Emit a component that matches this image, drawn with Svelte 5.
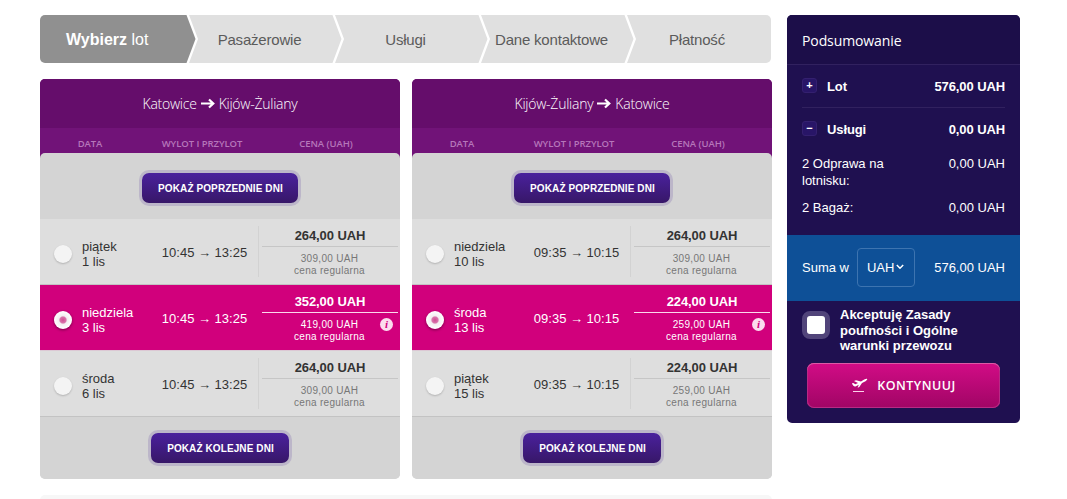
<script>
	let steps = ["Pasażerowie", "Usługi", "Dane kontaktowe", "Płatność"];

	let flights = [
		{
			from: "Katowice",
			to: "Kijów-Żuliany",
			selected: 1,
			days: [
				{ day: "piątek", date: "1 lis", out: "10:45", back: "13:25", price: "264,00", regular: "309,00" },
				{ day: "niedziela", date: "3 lis", out: "10:45", back: "13:25", price: "352,00", regular: "419,00" },
				{ day: "środa", date: "6 lis", out: "10:45", back: "13:25", price: "264,00", regular: "309,00" }
			]
		},
		{
			from: "Kijów-Żuliany",
			to: "Katowice",
			selected: 1,
			days: [
				{ day: "niedziela", date: "10 lis", out: "09:35", back: "10:15", price: "264,00", regular: "309,00" },
				{ day: "środa", date: "13 lis", out: "09:35", back: "10:15", price: "224,00", regular: "259,00" },
				{ day: "piątek", date: "15 lis", out: "09:35", back: "10:15", price: "224,00", regular: "259,00" }
			]
		}
	];

	function select(f, d) {
		flights[f].selected = d;
	}
</script>

<main>
	<div class="content">
		<nav class="steps">
			<div class="step active"><b>Wybierz</b>&nbsp;lot</div>
			{#each steps as step}
				<div class="step">{step}</div>
			{/each}
		</nav>

		<div class="flights">
			{#each flights as flight, f}
				<section class="panel">
					<h2>
						{flight.from}
						<svg width="14" height="12" viewBox="0 0 14 12">
							<path d="M0 5.5H12M8 1.5L12.3 5.5L8 9.5" fill="none" stroke="#fff" stroke-width="2.2" />
						</svg>
						{flight.to}
					</h2>
					<div class="columns">
						<span>DATA</span>
						<span>WYLOT I PRZYLOT</span>
						<span>CENA (UAH)</span>
					</div>
					<div class="body">
						<div class="more top"><button class="prev">POKAŻ POPRZEDNIE DNI</button></div>
						{#each flight.days as d, i}
							<!-- svelte-ignore a11y_click_events_have_key_events, a11y_no_static_element_interactions -->
							<div class="row" class:selected={flight.selected === i} on:click={() => select(f, i)}>
								<span class="radio"></span>
								<div class="day">{d.day}<br />{d.date}</div>
								<div class="time">{d.out} → {d.back}</div>
								<div class="fare">
									<div class="price">{d.price} UAH</div>
									<div class="regular">{d.regular} UAH<br />cena regularna</div>
									{#if flight.selected === i}
										<span class="info">i</span>
									{/if}
								</div>
							</div>
						{/each}
						<div class="more"><button class="next">POKAŻ KOLEJNE DNI</button></div>
					</div>
				</section>
			{/each}
		</div>
		<div class="next-box"></div>
	</div>

	<aside>
		<h3>Podsumowanie</h3>
		<div class="group">
			<span class="toggle">+</span>
			<span>Lot</span>
			<span class="amount">576,00 UAH</span>
		</div>
		<div class="group services">
			<span class="toggle">−</span>
			<span>Usługi</span>
			<span class="amount">0,00 UAH</span>
		</div>
		<div class="item checkin"><span>2 Odprawa na lotnisku:</span><span>0,00 UAH</span></div>
		<div class="item"><span>2 Bagaż:</span><span>0,00 UAH</span></div>
		<div class="total">
			<span>Suma w</span>
			<div class="currency">
				UAH
				<svg width="8" height="6" viewBox="0 0 8 6">
					<path d="M0.8 1L4 4.2L7.2 1" fill="none" stroke="#fff" stroke-width="1.5" />
				</svg>
			</div>
			<span class="amount">576,00 UAH</span>
		</div>
		<div class="terms">
			<span class="check"></span>
			<b>Akceptuję Zasady poufności i Ogólne warunki przewozu</b>
		</div>
		<button class="continue">
			<svg width="17" height="15" viewBox="0 0 17 15">
				<path d="M0.8 5.6L2.2 5L4.4 6.3L7 5.1L3 3L5 2.2L10 3.5L13.2 1.6C14.5 0.9 15.9 0.6 16.2 1.1C16.5 1.7 15.7 2.5 14.5 3.2L11 5.1L8.3 9L6.6 9.7L7.8 6.8L5 8.3C3.8 8.8 3 8.5 2.4 7.8Z" fill="#fff" />
				<path d="M2 13.5H13" stroke="#fbd3ea" stroke-width="1" />
			</svg>
			KONTYNUUJ
		</button>
	</aside>
</main>

<style>
	:global(body) {
		background: #fff;
		overflow: hidden;
	}

	main {
		display: flex;
		align-items: flex-start;
		gap: 15px;
		box-sizing: border-box;
		height: 499px;
		padding: 15px 0 0 40px;
		overflow: hidden;
		font: 13px/15px "Liberation Sans", Arial, sans-serif;
		color: #333;
	}

	button {
		border: 0;
		padding: 0;
		color: #fff;
		cursor: pointer;
	}

	.content {
		width: 732px;
	}

	/* step bar */
	.steps {
		display: flex;
		width: 731px;
		height: 48px;
		border-radius: 5px;
		overflow: hidden;
	}

	.step {
		display: flex;
		align-items: center;
		justify-content: center;
		box-sizing: border-box;
		width: 154px;
		margin-left: -8px;
		padding-right: 11px;
		flex: none;
		background: #e0e0e0;
		color: #5b5b5b;
		font-size: 15px;
		letter-spacing: -0.2px;
		clip-path: polygon(1px 0, 144.5px 0, 153.5px 50%, 144.5px 100%, 1px 100%, 10px 50%);
	}

	.step.active {
		justify-content: flex-start;
		width: 156px;
		margin-left: 0;
		padding-left: 26px;
		background: #909090;
		color: #fff;
		font-size: 16px;
		letter-spacing: 0;
		clip-path: polygon(0 0, 146.5px 0, 155.5px 50%, 146.5px 100%, 0 100%);
	}

	.step:last-child {
		width: 145px;
		padding-right: 3px;
		clip-path: polygon(1px 0, 100% 0, 100% 100%, 1px 100%, 10px 50%);
	}

	/* flight lists */
	.flights {
		display: flex;
		gap: 12px;
		margin-top: 16px;
	}

	.panel {
		width: 360px;
		border-radius: 5px;
		background: linear-gradient(#711378 90px, #d4d4d4 90px);
		overflow: hidden;
	}

	h2 {
		display: flex;
		align-items: center;
		justify-content: center;
		gap: 4px;
		height: 49px;
		margin: 0;
		background: #650d6b;
		color: #fff;
		font: 300 14px "Open Sans", sans-serif;
		letter-spacing: -0.25px;
	}

	.columns {
		display: grid;
		grid-template-columns: 100px 124px 124px;
		height: 25px;
		line-height: 31px;
		text-align: center;
		color: #b676ba;
		font-family: "Open Sans", sans-serif;
		font-weight: 600;
		font-size: 9.5px;
		letter-spacing: -0.05px;
	}

	.body {
		border-radius: 5px;
		background: #d4d4d4;
		overflow: hidden;
	}

	.more {
		display: flex;
		align-items: flex-start;
		justify-content: center;
		box-sizing: border-box;
		height: 62px;
		padding-top: 16px;
	}

	.more.top {
		height: 66px;
		padding-top: 20px;
	}

	.more button {
		height: 30px;
		padding: 1px 0 0 1px;
		border-radius: 7px;
		background: linear-gradient(#4a219d, #371768);
		box-shadow: 0 0 0 3px #bcb6c9;
		font: bold 10px "Liberation Sans", Arial, sans-serif;
		letter-spacing: 0.1px;
	}

	.prev {
		width: 156px;
	}

	.next {
		width: 138px;
	}

	.row {
		display: flex;
		align-items: center;
		box-sizing: border-box;
		height: 66px;
		padding-left: 14px;
		border-bottom: 1px solid #c3c3c3;
		background: #dedede;
	}

	.row.selected {
		background: #d1007c;
		color: #fff;
		border-color: #dcc8d4;
	}

	.radio {
		width: 18px;
		height: 18px;
		margin-top: 4px;
		border-radius: 50%;
		background: #f4f4f4;
		box-shadow: 0 1px 2px rgba(0, 0, 0, 0.2);
	}

	.selected .radio {
		background: radial-gradient(circle, #cf4d93 0, #d973ab 3px, #f3eef1 4.2px, #fff 9px);
		box-shadow: 0 1px 3px rgba(0, 0, 0, 0.45);
	}

	.day {
		width: 66px;
		margin: 5px 0 0 10px;
	}

	.time {
		box-sizing: border-box;
		width: 110px;
		margin-top: 2px;
		padding-left: 3px;
		text-align: center;
	}

	.fare {
		position: relative;
		width: 140px;
		height: 51px;
		margin-bottom: 1px;
		border-left: 1px solid #d2d2d2;
		text-align: center;
	}

	.selected .fare {
		border-color: transparent;
	}

	.price {
		box-sizing: border-box;
		height: 21px;
		margin: 0 1px 0 3px;
		border-bottom: 1px solid #c6c6c6;
		font-weight: bold;
		line-height: 20px;
		letter-spacing: -0.1px;
	}

	.selected .price {
		border-color: #fbd9ec;
	}

	.regular {
		padding: 6px 0 0 1px;
		color: #777;
		font-size: 10px;
		line-height: 12px;
		letter-spacing: 0.3px;
	}

	.selected .regular {
		color: #fff;
	}

	.info {
		position: absolute;
		top: 26px;
		right: 6px;
		width: 13px;
		height: 13px;
		border-radius: 50%;
		background: #fbdcee;
		color: #d1007c;
		font: italic bold 11px/13px "Liberation Serif", serif;
	}

	.next-box {
		height: 20px;
		margin-top: 16px;
		border-radius: 5px;
		background: #f7f7f7;
	}

	/* summary */
	aside {
		width: 233px;
		height: 408px;
		border-radius: 5px;
		background: #1f1050;
		color: #fff;
		overflow: hidden;
	}

	h3 {
		height: 49px;
		margin: 0;
		padding-left: 15px;
		border-bottom: 1px solid #31215f;
		background: #1c0e49;
		font: 500 14px/52px "Open Sans", sans-serif;
		letter-spacing: -0.1px;
	}

	.group {
		display: flex;
		align-items: center;
		height: 42px;
		margin: 0 15px;
		border-bottom: 1px solid #31215f;
		font-weight: bold;
		letter-spacing: -0.1px;
	}

	.group.services {
		border: 0;
	}

	.toggle {
		width: 13px;
		height: 13px;
		margin: -2px 10px 0 0;
		border: 1px solid #34206f;
		border-radius: 3px;
		background: #281567;
		font-size: 11px;
		line-height: 13px;
		text-align: center;
	}

	.amount {
		margin-left: auto;
	}

	.item {
		display: flex;
		justify-content: space-between;
		margin: 0 15px 10px;
		line-height: 17px;
	}

	.item span:first-child {
		width: 90px;
	}

	.checkin {
		margin-top: 5px;
	}

	.total {
		display: flex;
		align-items: center;
		height: 66px;
		margin-top: 19px;
		padding: 0 15px 2px;
		box-sizing: border-box;
		background: #0e5097;
	}

	.currency {
		display: flex;
		align-items: center;
		gap: 2px;
		box-sizing: border-box;
		width: 58px;
		height: 39px;
		margin-left: 8px;
		padding-left: 9px;
		border: 1px solid #3d74b0;
		border-radius: 4px;
	}

	.terms {
		display: flex;
		margin: 6px 0 0 15px;
		line-height: 15.5px;
	}

	.terms b {
		width: 135px;
	}

	.check {
		width: 18px;
		height: 18px;
		margin: 4px 10px 0 0;
		border: 5px solid #51447a;
		border-radius: 8px;
		background: #fff;
	}

	.continue {
		display: flex;
		align-items: center;
		justify-content: center;
		gap: 9px;
		width: 193px;
		height: 45px;
		margin: 9px 0 0 20px;
		padding-top: 1px;
		border-radius: 7px;
		background: linear-gradient(#d20c86, #a00565);
		box-shadow: inset 0 1px 0 #dc5aa5, inset 0 0 0 1px #b82a85;
		font: 600 12.5px "Open Sans", sans-serif;
		letter-spacing: 0.5px;
	}
</style>
